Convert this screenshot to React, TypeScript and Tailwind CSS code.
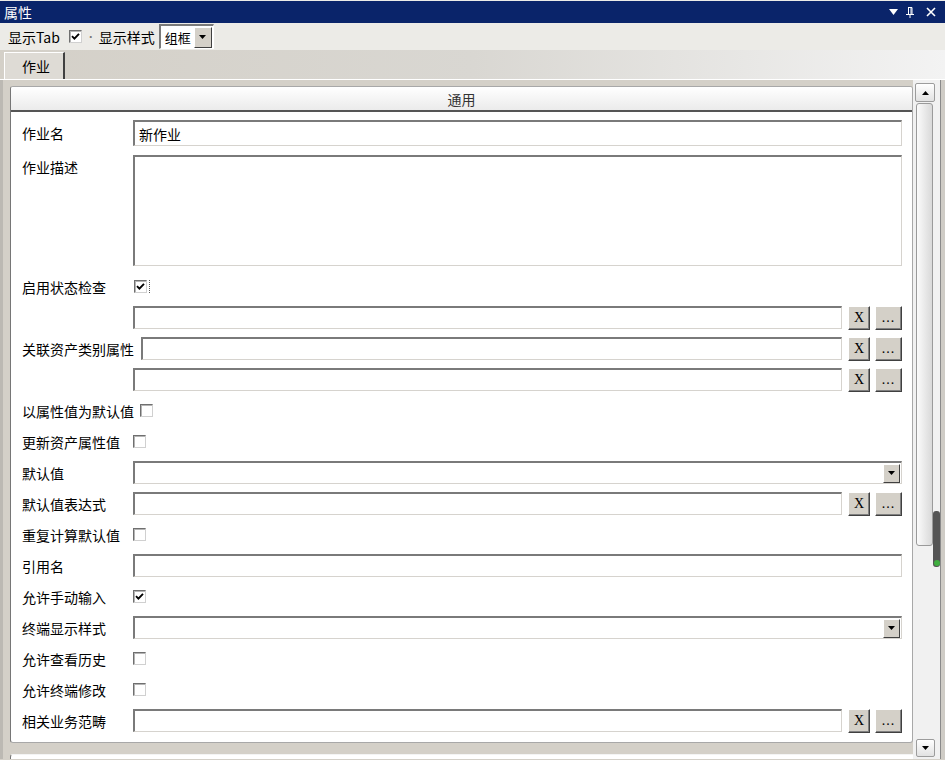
import React from "react";

type Kids = { children?: React.ReactNode };

function Tri() {
  return (
    <svg width="7" height="4" viewBox="0 0 7 4">
      <path d="M0 0 H7 L3.5 4 Z" fill="#000" />
    </svg>
  );
}

function Check({ checked = false }: { checked?: boolean }) {
  return (
    <span className="flex h-[13px] w-[13px] items-center justify-center border border-t-[#6f6f6f] border-l-[#6f6f6f] border-r-[#d0d0d0] border-b-[#d0d0d0] bg-white shadow-[inset_1px_1px_0_#b4b4b4]">
      {checked ? (
        <svg width="9" height="9" viewBox="0 0 9 9">
          <path d="M1 4.2 L3.4 6.6 L8 1.8" stroke="#000" strokeWidth="1.9" fill="none" />
        </svg>
      ) : null}
    </span>
  );
}

function Field({ children, className = "" }: Kids & { className?: string }) {
  return (
    <div
      className={`flex min-w-0 items-center border-t-2 border-l-2 border-r border-b border-t-[#7a7a7a] border-l-[#7a7a7a] border-r-[#d6d3ce] border-b-[#d6d3ce] bg-white ${className}`}
    >
      {children}
    </div>
  );
}

function Btn({ children, className = "" }: Kids & { className?: string }) {
  return (
    <div
      className={`flex h-[24px] shrink-0 items-center justify-center border border-t-white border-l-white border-r-[#404040] border-b-[#404040] bg-[#d4d0c8] font-['Liberation_Serif',serif] text-[14px] leading-none text-black shadow-[inset_-1px_-1px_0_#808080] ${className}`}
    >
      {children}
    </div>
  );
}

function Pick() {
  return (
    <>
      <Btn className="ml-[6px] w-[22px]">X</Btn>
      <Btn className="ml-[5px] w-[27px] tracking-[1px]">...</Btn>
    </>
  );
}

function Combo() {
  return (
    <Field className="h-[23px] flex-1 justify-end pr-px">
      <div className="flex h-[19px] w-[17px] items-center justify-center border border-t-white border-l-white border-r-[#404040] border-b-[#404040] bg-[#d4d0c8]">
        <Tri />
      </div>
    </Field>
  );
}

function Label({ children }: Kids) {
  return <span className="mr-[6px] min-w-[105px] whitespace-nowrap leading-[16px]">{children}</span>;
}

function Row({ label, children }: Kids & { label?: string }) {
  return (
    <div className="flex h-[31px] items-center">
      <Label>{label}</Label>
      {children}
    </div>
  );
}

export default function App() {
  return (
    <div className="h-[760px] w-[945px] overflow-hidden bg-[#d4d0c8] font-['Noto_Sans_CJK_SC','Noto_Sans',sans-serif] text-[14px] text-black">
      {/* title bar */}
      <div className="bg-[#ecebe7] pt-px">
        <div className="flex h-[22px] items-center bg-[#0a246a] pl-[4px] pr-[9px] text-white">
          <span className="leading-none">属性</span>
          <div className="ml-auto flex items-center">
            <svg width="9" height="6" viewBox="0 0 9 6">
              <path d="M0 0 H9 L4.5 6 Z" fill="#fff" />
            </svg>
            <svg className="ml-[8px]" width="8" height="11" viewBox="0 0 8 11">
              <path d="M2 0.5 H6 V7 M2.5 0.5 V7 M5 0.5 V7 M0 7.5 H8 M4 7.5 V11" stroke="#fff" strokeWidth="1" fill="none" />
            </svg>
            <svg className="ml-[12px]" width="10" height="10" viewBox="0 0 10 10">
              <path d="M1 1 L9 9 M9 1 L1 9" stroke="#fff" strokeWidth="1.6" />
            </svg>
          </div>
        </div>
      </div>

      {/* toolbar */}
      <div className="flex h-[27px] items-center bg-[#ecebe7] pl-[8px]">
        <span className="leading-none">显示Tab</span>
        <span className="ml-[9px]">
          <Check checked />
        </span>
        <span className="ml-[4px] text-[10px] text-[#777]">·</span>
        <span className="ml-[3px] leading-none">显示样式</span>
        <div className="ml-[4px] flex h-[25px] w-[55px] items-center border-t-2 border-l-2 border-r border-b border-t-[#7a7a7a] border-l-[#7a7a7a] border-r-[#ffffff] border-b-[#ffffff] bg-white">
          <span className="ml-[4px] whitespace-nowrap text-[13px] leading-none">组框</span>
          <div className="ml-auto mr-px flex h-[21px] w-[18px] items-center justify-center border border-t-white border-l-white border-r-[#404040] border-b-[#404040] bg-[#d4d0c8]">
            <Tri />
          </div>
        </div>
      </div>

      {/* tab row */}
      <div className="flex h-[29px] items-end bg-linear-to-r from-[#d4d0c8] via-[#d9d7d2] to-[#f3f3f3] pl-[4px]">
        <div className="flex h-[27px] w-[61px] items-center border-t border-l border-t-white border-l-white border-r-2 border-r-[#404040] bg-[#dedbd5] pl-[17px] leading-none">
          作业
        </div>
      </div>
      <div className="h-px bg-white" />

      {/* main */}
      <div className="flex h-[679px] overflow-hidden">
        <div className="flex w-[913px] flex-col border-l-[3px] border-l-[#bcb9b3] pl-[7px] pt-[6px]">
          <div className="flex shrink-0 flex-col overflow-hidden rounded-[3px] border border-[#a8a8a8] border-l-[#767676] bg-white">
            <div className="flex h-[25px] shrink-0 items-center justify-center border-b-2 border-b-[#555555] bg-linear-to-b from-white to-[#ebebeb] leading-none text-[#333]">
              通用
            </div>
            <div className="shrink-0 pl-[11px] pr-[10px] pt-[8px] pb-[6px]">
              <div className="flex h-[26px] items-center">
                <Label>作业名</Label>
                <Field className="h-[26px] flex-1 pl-[4px]">
                  <span className="leading-none">新作业</span>
                </Field>
              </div>
              <div className="mt-[9px] flex">
                <span className="mr-[6px] min-w-[105px] pt-[4px] leading-[16px]">作业描述</span>
                <Field className="h-[111px] flex-1" />
              </div>
              <div className="mt-[5px]">
                <Row label="启用状态检查">
                  <span className="ml-px flex items-center">
                    <Check checked />
                    <span className="ml-px h-[13px] w-[2px] border-r border-dotted border-r-[#555]" />
                  </span>
                </Row>
                <Row>
                  <Field className="h-[23px] flex-1" />
                  <Pick />
                </Row>
                <Row label="关联资产类别属性">
                  <Field className="ml-px h-[23px] flex-1" />
                  <Pick />
                </Row>
                <Row>
                  <Field className="h-[23px] flex-1" />
                  <Pick />
                </Row>
                <Row label="以属性值为默认值">
                  <Check />
                </Row>
                <Row label="更新资产属性值">
                  <Check />
                </Row>
                <Row label="默认值">
                  <Combo />
                </Row>
                <Row label="默认值表达式">
                  <Field className="h-[23px] flex-1" />
                  <Pick />
                </Row>
                <Row label="重复计算默认值">
                  <Check />
                </Row>
                <Row label="引用名">
                  <Field className="h-[23px] flex-1" />
                </Row>
                <Row label="允许手动输入">
                  <Check checked />
                </Row>
                <Row label="终端显示样式">
                  <Combo />
                </Row>
                <Row label="允许查看历史">
                  <Check />
                </Row>
                <Row label="允许终端修改">
                  <Check />
                </Row>
                <Row label="相关业务范畴">
                  <Field className="h-[23px] flex-1" />
                  <Pick />
                </Row>
              </div>
            </div>
          </div>
          <div className="mt-[11px] h-[8px] shrink-0 rounded-tl-[3px] border-t border-l border-t-[#f4f4f4] border-l-[#767676] bg-white" />
        </div>

        {/* scrollbar */}
        <div className="relative flex w-[32px]">
          <div className="flex w-[27px] flex-col bg-[#f1f1f1]">
            <div className="ml-[2px] mt-[3px] flex h-[19px] w-[20px] shrink-0 items-center justify-center rounded-[2px] border border-[#9c9c9c] bg-linear-to-b from-white to-[#e2e2e2]">
              <svg width="7" height="4" viewBox="0 0 7 4">
                <path d="M0 4 H7 L3.5 0 Z" fill="#000" />
              </svg>
            </div>
            <div className="ml-[3px] mt-px h-[443px] w-[17px] shrink-0 rounded-[3px] border border-[#9a9a9a] bg-linear-to-r from-[#fbfbfb] to-[#d9d9d9]" />
            <div className="flex-1" />
            <div className="mb-[2px] ml-[3px] flex h-[18px] w-[19px] shrink-0 items-center justify-center rounded-[2px] border border-[#9c9c9c] bg-linear-to-b from-white to-[#e2e2e2]">
              <Tri />
            </div>
          </div>
          <div className="w-[5px] border-l border-l-[#8a8a8a] bg-[#cfccc6]" />
          <div className="absolute left-[20px] top-[431px] flex h-[56px] w-[7px] flex-col items-center justify-end rounded-[3px] bg-[#555555] pb-[1px]">
            <span className="h-[6px] w-[6px] rounded-full bg-[#3fae3f]" />
          </div>
        </div>
      </div>
    </div>
  );
}
